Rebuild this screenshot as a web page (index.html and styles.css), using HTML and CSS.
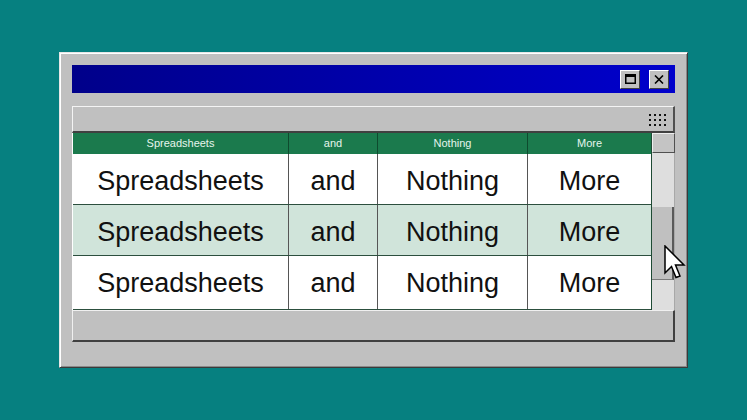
FILE: index.html
```html
<!DOCTYPE html>
<html>
<head>
<meta charset="utf-8">
<link rel="stylesheet" href="styles.css">
</head>
<body>
<div class="window">
  <div class="titlebar">
    <button class="tbtn" aria-label="restore">
      <svg width="11" height="10" viewBox="0 0 11 10"><rect x="0.75" y="0.75" width="9.5" height="8.5" fill="none" stroke="#000" stroke-width="1.5"/><rect x="0" y="0" width="11" height="3" fill="#000"/></svg>
    </button>
    <button class="tbtn close" aria-label="close">
      <svg width="10" height="9" viewBox="0 0 10 9"><path d="M1 0.5 L9 8.5 M9 0.5 L1 8.5" stroke="#000" stroke-width="1.6" fill="none"/></svg>
    </button>
  </div>
  <div class="toolbar">
    <svg class="grip" width="19" height="13" viewBox="0 0 19 13">
      <g fill="#111">
        <rect x="1" y="1" width="2" height="2"/><rect x="6" y="1" width="2" height="2"/><rect x="11" y="1" width="2" height="2"/><rect x="16" y="1" width="2" height="2"/>
        <rect x="1" y="6" width="2" height="2"/><rect x="6" y="6" width="2" height="2"/><rect x="11" y="6" width="2" height="2"/><rect x="16" y="6" width="2" height="2"/>
        <rect x="1" y="11" width="2" height="2"/><rect x="6" y="11" width="2" height="2"/><rect x="11" y="11" width="2" height="2"/><rect x="16" y="11" width="2" height="2"/>
      </g>
    </svg>
  </div>
  <div class="grid-area">
    <div class="sheet">
      <div class="row head">
        <div class="c c1">Spreadsheets</div>
        <div class="c c2">and</div>
        <div class="c c3">Nothing</div>
        <div class="c c4">More</div>
      </div>
      <div class="row">
        <div class="c c1">Spreadsheets</div>
        <div class="c c2">and</div>
        <div class="c c3">Nothing</div>
        <div class="c c4">More</div>
      </div>
      <div class="row alt">
        <div class="c c1">Spreadsheets</div>
        <div class="c c2">and</div>
        <div class="c c3">Nothing</div>
        <div class="c c4">More</div>
      </div>
      <div class="row last">
        <div class="c c1">Spreadsheets</div>
        <div class="c c2">and</div>
        <div class="c c3">Nothing</div>
        <div class="c c4">More</div>
      </div>
    </div>
    <div class="scroll">
      <div class="sbtn"></div>
      <div class="track"><div class="thumb"></div></div>
    </div>
  </div>
  <div class="statusbar"></div>
  <svg class="cursor" width="22" height="35" viewBox="0 0 22 35">
    <path d="M1 1 L1 28 L7.5 21.5 L12 32.5 L16 31 L11.5 20 L20 20 Z" fill="#fff" stroke="#000" stroke-width="1.5" stroke-linejoin="miter"/>
  </svg>
</div>
</body>
</html>
```

FILE: styles.css
```css
* { box-sizing: border-box; }
html, body { margin: 0; padding: 0; }
body {
  width: 747px;
  height: 420px;
  background: #068080;
  display: flex;
  align-items: center;
  justify-content: center;
  font-family: "Liberation Sans", Arial, sans-serif;
  overflow: hidden;
}
.window {
  position: relative;
  width: 629px;
  height: 316px;
  background: #c0c0c0;
  border: 1px solid;
  border-color: #e6e6e6 #3a3a3a #3a3a3a #e6e6e6;
  box-shadow: inset 1px 1px 0 #ffffff, inset -1px -1px 0 #8a8a8a;
  padding: 12px 12px 25px 12px;
  display: flex;
  flex-direction: column;
}
.titlebar {
  height: 28px;
  flex: none;
  background: linear-gradient(to right, #00008a, #0000cc);
  display: flex;
  justify-content: flex-end;
  align-items: center;
  gap: 9px;
  padding-right: 6px;
}
.tbtn {
  width: 20px;
  height: 19px;
  padding: 0;
  margin: 0;
  background: #c0c0c0;
  border: 1px solid;
  border-color: #ffffff #404040 #404040 #ffffff;
  display: flex;
  align-items: center;
  justify-content: center;
}
.toolbar {
  margin-top: 13px;
  height: 27px;
  flex: none;
  background: #c0c0c0;
  border-top: 1px solid #f4f4f4;
  border-left: 1px solid #f4f4f4;
  border-right: 2px solid #505050;
  border-bottom: 2px solid #404040;
  display: flex;
  align-items: center;
  justify-content: flex-end;
  padding-right: 6px;
}
.grid-area {
  height: 177px;
  flex: none;
  display: flex;
}
.sheet {
  width: 580px;
  border-left: 1px solid #ffffff;
  border-right: 1px solid #1e4a34;
  display: flex;
  flex-direction: column;
}
.row {
  display: grid;
  grid-template-columns: 216px 89px 150px 123px;
  height: 51px;
  flex: none;
  background: #ffffff;
  border-bottom: 1px solid #2c4f3e;
  font-size: 27px;
  color: #111;
}
.row .c { padding-top: 4px; }
.row.last { flex: 1; height: auto; }
.row.last .c { padding-bottom: 3px; }
.row.alt { background: #d0e4da; }
.row.head {
  height: 21px;
  background: #1b7a4d;
  color: #e6f5ec;
  font-size: 11px;
  border-bottom: none;
}
.row.head .c { padding-top: 0; padding-bottom: 1px; }
.c {
  display: flex;
  align-items: center;
  justify-content: center;
  border-right: 1px solid #555;
}
.c4 { border-right: none; }
.head .c { border-right: 1px solid #0e4a2e; }
.head .c4 { border-right: none; }
.scroll {
  width: 23px;
  display: flex;
  flex-direction: column;
}
.sbtn {
  height: 20px;
  flex: none;
  background: #c4c4c4;
  border: 1px solid;
  border-color: #eeeeee #505050 #505050 #eeeeee;
}
.track {
  flex: 1;
  background: #dedede;
  border-right: 1px solid #a8a8a8;
}
.thumb {
  margin-top: 54px;
  height: 73px;
  background: #c0c0c0;
  border-right: 2px solid #5a5a5a;
  border-bottom: 1px solid #7a7a7a;
}
.statusbar {
  height: 32px;
  flex: none;
  background: #c0c0c0;
  border-top: 1px solid #f0f0f0;
  border-left: 1px solid #f0f0f0;
  border-right: 2px solid #404040;
  border-bottom: 2px solid #404040;
}
.cursor {
  position: absolute;
  left: 604px;
  top: 192px;
}
```
